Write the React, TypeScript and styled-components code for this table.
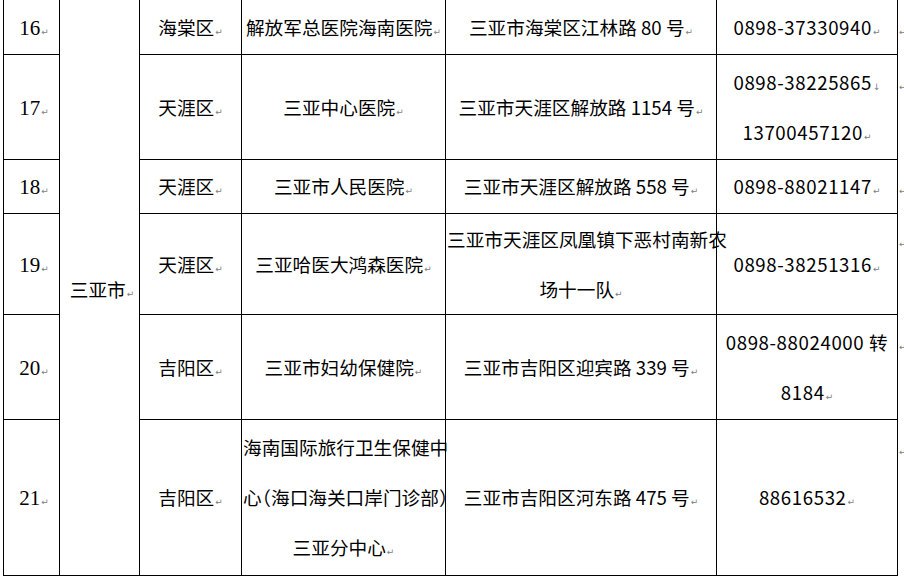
import React from "react";
import styled, { createGlobalStyle } from "styled-components";

type Line = { text: React.ReactNode; mark?: "para" | "break" };

type Entry = {
  no: string;
  district: string;
  name: Line[];
  addr: Line[];
  phone: Line[];
  height: number;
};

const Global = createGlobalStyle`
  html, body {
    margin: 0;
    padding: 0;
    background: #fff;
    overflow: hidden;
  }
  body {
    font-family: "Noto Sans CJK SC", "Microsoft YaHei", sans-serif;
    color: #000;
  }
`;

const Table = styled.table`
  margin-left: 3px;
  border-collapse: collapse;
  table-layout: fixed;
  width: 901px;
`;

const Col = styled.col<{ $w: number }>`
  width: ${(p) => p.$w}px;
`;

const Row = styled.tr<{ $h: number }>`
  height: ${(p) => p.$h}px;

  &:first-child td {
    border-top: none;
  }
`;

const Cell = styled.td<{ $spaced?: boolean }>`
  border: 1px solid #000;
  padding: 0 1px;
  text-align: center;
  vertical-align: middle;
  font-size: 18.67px;
  line-height: 50px;
  letter-spacing: ${(p) => (p.$spaced ? "0.6px" : "0")};
  white-space: nowrap;
  overflow: visible;
`;

const NumCell = styled(Cell)`
  font-family: "Liberation Serif", "Times New Roman", serif;
  font-size: 21px;
  padding-left: 6px;
  padding-top: 2px;
`;

const CityCell = styled(Cell)`
  padding-top: 4px;
  padding-left: 6px;
`;

const RowEnd = styled.td`
  border: none;
  padding: 0;
  vertical-align: middle;
  text-align: left;
  line-height: 50px;
  font-size: 18.67px;
  white-space: nowrap;
  overflow: visible;
`;

const Mark = styled.span`
  font-family: "DejaVu Sans", sans-serif;
  font-size: 9px;
  line-height: 0;
  letter-spacing: 0;
  color: #808080;
  margin-left: 1px;
`;

const Punct = styled.span`
  font-feature-settings: "halt" 1;
`;

const Para = () => <Mark>↵</Mark>;
const Break = () => <Mark>↓</Mark>;

const entries: Entry[] = [
  {
    no: "16",
    district: "海棠区",
    name: [{ text: "解放军总医院海南医院", mark: "para" }],
    addr: [{ text: "三亚市海棠区江林路 80 号", mark: "para" }],
    phone: [{ text: "0898-37330940", mark: "para" }],
    height: 54,
  },
  {
    no: "17",
    district: "天涯区",
    name: [{ text: "三亚中心医院", mark: "para" }],
    addr: [{ text: "三亚市天涯区解放路 1154 号", mark: "para" }],
    phone: [
      { text: "0898-38225865", mark: "break" },
      { text: "13700457120", mark: "para" },
    ],
    height: 105,
  },
  {
    no: "18",
    district: "天涯区",
    name: [{ text: "三亚市人民医院", mark: "para" }],
    addr: [{ text: "三亚市天涯区解放路 558 号", mark: "para" }],
    phone: [{ text: "0898-88021147", mark: "para" }],
    height: 54,
  },
  {
    no: "19",
    district: "天涯区",
    name: [{ text: "三亚哈医大鸿森医院", mark: "para" }],
    addr: [
      { text: "三亚市天涯区凤凰镇下恶村南新农" },
      { text: "场十一队", mark: "para" },
    ],
    phone: [{ text: "0898-38251316", mark: "para" }],
    height: 101,
  },
  {
    no: "20",
    district: "吉阳区",
    name: [{ text: "三亚市妇幼保健院", mark: "para" }],
    addr: [{ text: "三亚市吉阳区迎宾路 339 号", mark: "para" }],
    phone: [{ text: "0898-88024000 转" }, { text: "8184", mark: "para" }],
    height: 105,
  },
  {
    no: "21",
    district: "吉阳区",
    name: [
      { text: "海南国际旅行卫生保健中" },
      {
        text: (
          <>
            心<Punct>（</Punct>海口海关口岸门诊部<Punct>）</Punct>
          </>
        ),
      },
      { text: "三亚分中心", mark: "para" },
    ],
    addr: [{ text: "三亚市吉阳区河东路 475 号", mark: "para" }],
    phone: [{ text: "88616532", mark: "para" }],
    height: 156,
  },
];

const Lines: React.FC<{ lines: Line[] }> = ({ lines }) => (
  <>
    {lines.map((l, i) => (
      <React.Fragment key={i}>
        {i > 0 && <br />}
        {l.text}
        {l.mark === "para" && <Para />}
        {l.mark === "break" && <Break />}
      </React.Fragment>
    ))}
  </>
);

const App: React.FC = () => {
  return (
    <>
      <Global />
      <Table>
        <colgroup>
          <Col $w={56} />
          <Col $w={80} />
          <Col $w={102} />
          <Col $w={204} />
          <Col $w={271} />
          <Col $w={181} />
          <Col $w={7} />
        </colgroup>
        <tbody>
          {entries.map((e, idx) => {
            const lineCount = Math.max(e.name.length, e.addr.length, e.phone.length);
            return (
              <Row key={e.no} $h={e.height}>
                <NumCell>
                  {e.no}
                  <Para />
                </NumCell>
                {idx === 0 && (
                  <CityCell rowSpan={entries.length}>
                    三亚市
                    <Para />
                  </CityCell>
                )}
                <Cell>
                  {e.district}
                  <Para />
                </Cell>
                <Cell>
                  <Lines lines={e.name} />
                </Cell>
                <Cell>
                  <Lines lines={e.addr} />
                </Cell>
                <Cell $spaced>
                  <Lines lines={e.phone} />
                </Cell>
                <RowEnd>
                  <Para />
                  {Array.from({ length: lineCount - 1 }).map((_, i) => (
                    <React.Fragment key={i}>
                      <br />
                      &nbsp;
                    </React.Fragment>
                  ))}
                </RowEnd>
              </Row>
            );
          })}
        </tbody>
      </Table>
    </>
  );
};

export default App;
